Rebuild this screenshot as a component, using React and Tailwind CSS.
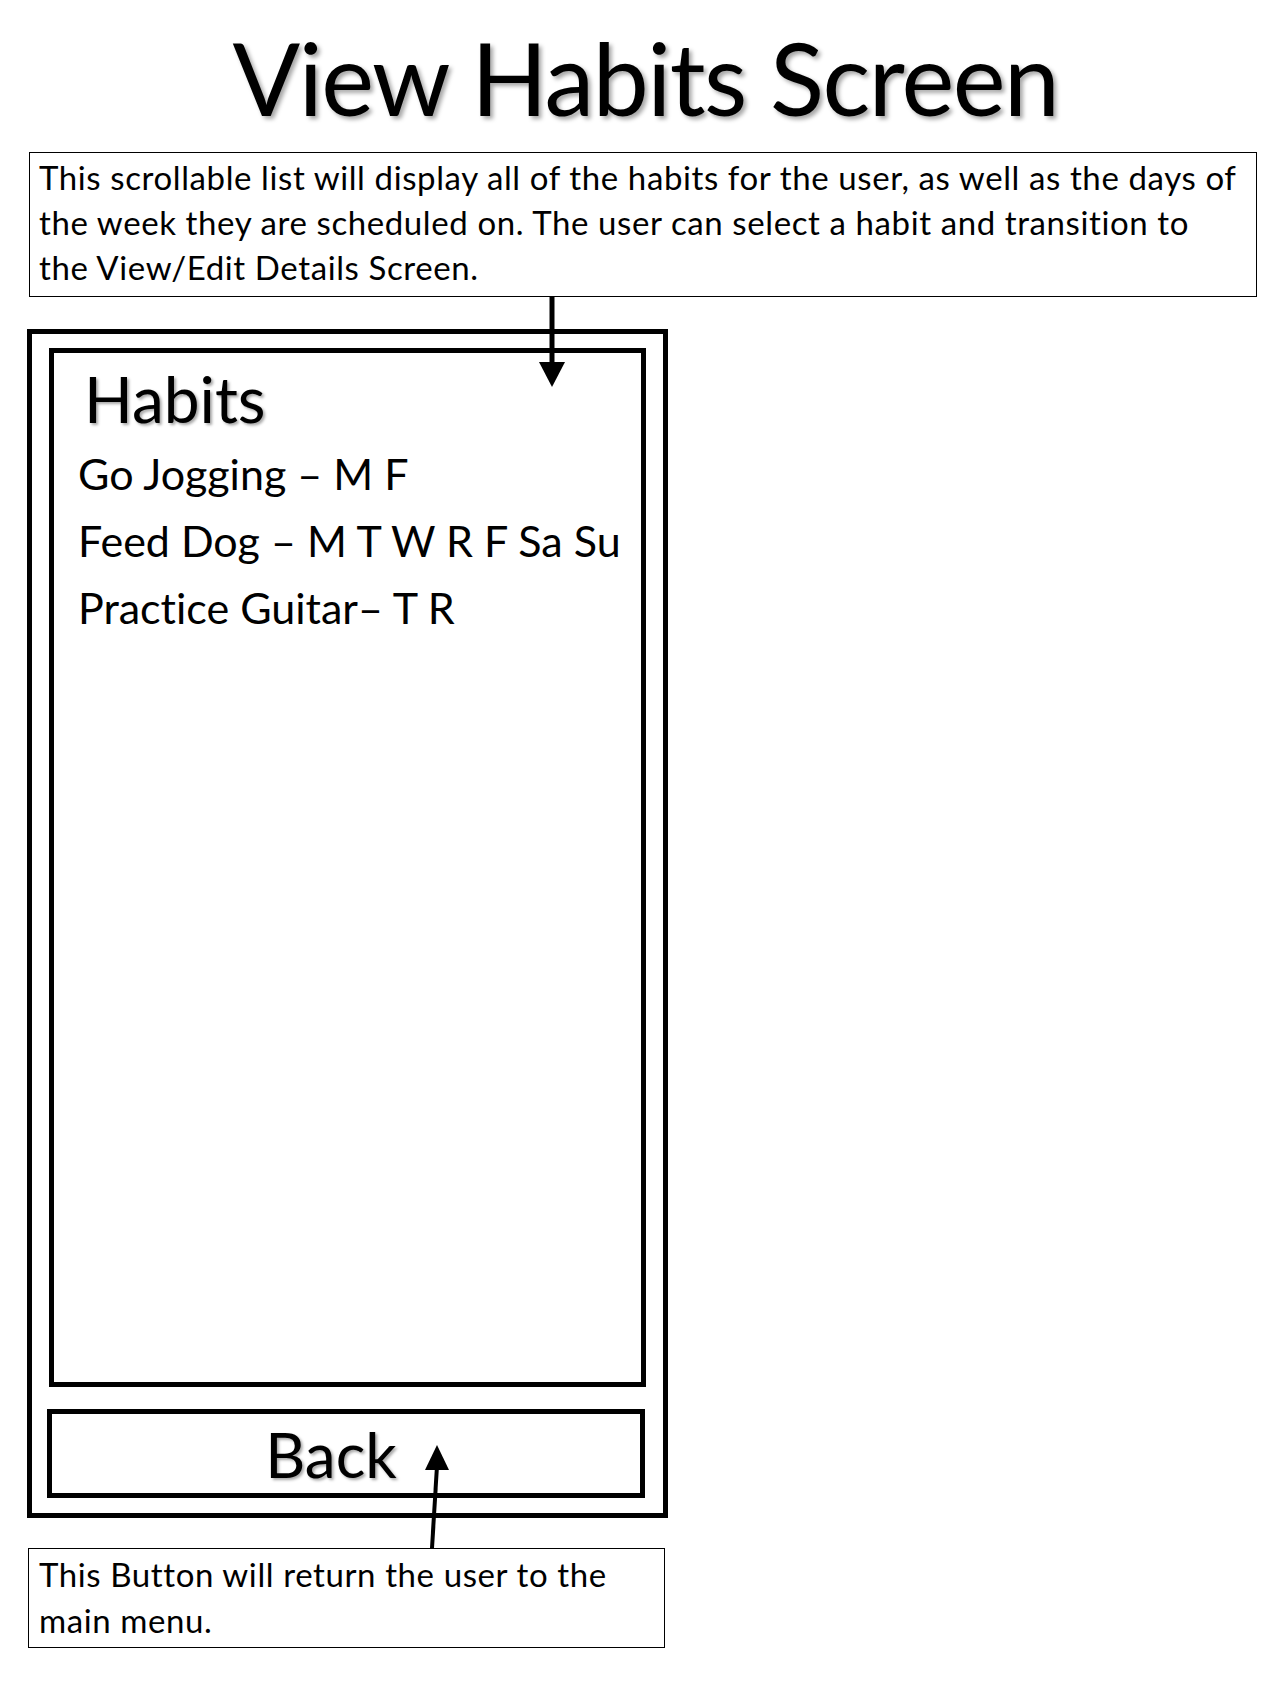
import React from "react";

const habits = [
  "Go Jogging \u2013 M F",
  "Feed Dog \u2013 M T W R F Sa Su",
  "Practice Guitar\u2013 T R",
];

function Arrows() {
  // callout arrows drawn over the mockup
  return (
    <svg className="absolute inset-0 pointer-events-none" width="1280" height="1707" viewBox="0 0 1280 1707">
      <line x1="552" y1="297" x2="552" y2="364" stroke="black" strokeWidth="5" />
      <polygon points="539,362 565,362 552,387" fill="black" />
      <line x1="432" y1="1548" x2="437" y2="1466" stroke="black" strokeWidth="4" />
      <polygon points="425,1470 449,1470 437,1445" fill="black" />
    </svg>
  );
}

export default function App() {
  return (
    <div className="relative w-[1280px] h-[1707px] bg-white text-black font-['Lato',sans-serif] [font-variant-ligatures:none]">
      {/* Title */}
      <h1 className="pl-[11px] pt-[22px] h-[152px] text-center text-[100px] leading-[110px] tracking-[-1.5px] [text-shadow:3px_3px_4px_rgba(0,0,0,0.35)]">
        View Habits Screen
      </h1>

      {/* Top note */}
      <div className="ml-[29px] w-[1228px] h-[145px] border border-black px-[9px] pt-[2px] text-[33px] leading-[45px] tracking-[0.6px] whitespace-nowrap">
        This scrollable list will display all of the habits for the user, as well as the days of
        <br />
        the week they are scheduled on. The user can select a habit and transition to
        <br />
        the View/Edit Details Screen.
      </div>

      {/* Phone frame */}
      <div className="ml-[27px] mt-[32px] w-[641px] h-[1189px] border-[5px] border-black flex flex-col pt-[14px] pb-[15px]">
        <div className="mx-[17px] h-[1039px] border-[5px] border-black pl-[24px] pt-[10px]">
          <h2 className="pl-[6px] text-[64px] leading-[72px] [text-shadow:2px_2px_3px_rgba(0,0,0,0.35)]">Habits</h2>
          <ul className="flex flex-col pt-[5px]">
            {habits.map((h) => (
              <li key={h} className="text-[43px] leading-[67px] whitespace-nowrap">
                {h}
              </li>
            ))}
          </ul>
        </div>
        <div className="mt-[22px] ml-[15px] mr-[18px] h-[89px] border-[5px] border-black flex items-center justify-center pr-[30px]">
          <span className="text-[62px] leading-none [text-shadow:2px_2px_3px_rgba(0,0,0,0.35)]">Back</span>
        </div>
      </div>

      {/* Bottom note */}
      <div className="ml-[28px] mt-[30px] w-[637px] h-[100px] border border-black px-[10px] pt-[2px] text-[33px] leading-[46px] tracking-[0.6px]">
        This Button will return the user to the
        <br />
        main menu.
      </div>

      <Arrows />
    </div>
  );
}
